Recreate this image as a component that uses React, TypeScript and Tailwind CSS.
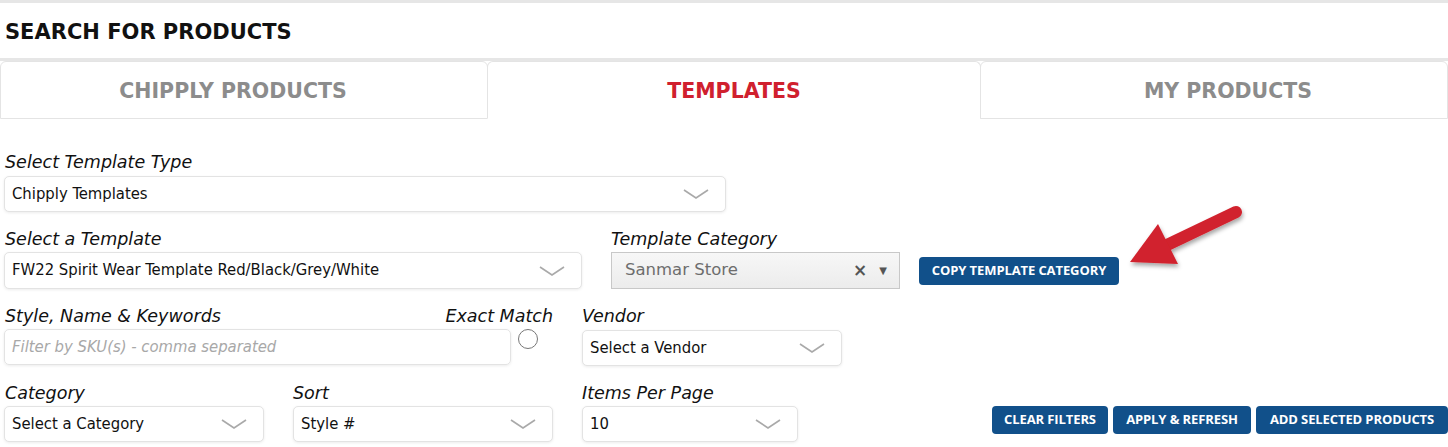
import React from "react";

const Chevron = () => (
  <svg width="26" height="10" viewBox="0 0 26 10" fill="none" className="shrink-0">
    <path d="M1 1 L13 9 L25 1" stroke="#a9a9a9" strokeWidth="1.6" />
  </svg>
);

const Label = ({ children, className = "" }: { children: React.ReactNode; className?: string }) => (
  <div className={`italic text-[17.5px] leading-[20px] text-[#111] font-['DejaVu_Sans',sans-serif] ${className}`}>
    {children}
  </div>
);

const Select = ({ value, className = "" }: { value: string; className?: string }) => (
  <div
    className={`flex items-center justify-between h-[36px] pl-[7px] pr-[16px] bg-white border border-[#e3e3e3] rounded-[5px] shadow-[0_1px_3px_rgba(0,0,0,0.08)] ${className}`}
  >
    <span className="text-[16.5px] text-[#111] font-['DejaVu_Sans_Condensed','DejaVu_Sans',sans-serif]">{value}</span>
    <Chevron />
  </div>
);

const Btn = ({ children, className = "" }: { children: React.ReactNode; className?: string }) => (
  <button
    className={`h-[28px] px-[10px] bg-[#11508a] text-white text-[13px] font-bold rounded-[4px] font-['Open_Sans',sans-serif] tracking-[-0.1px] ${className}`}
  >
    {children}
  </button>
);

const Tab = ({ label, active, className = "" }: { label: string; active?: boolean; className?: string }) => (
  <div
    className={`flex items-center justify-center h-[58px] pt-[3px] border border-[#e4e4e4] rounded-t-[6px] font-['DejaVu_Sans',sans-serif] font-bold text-[20.5px] ${
      active ? "text-[#d0202e] border-b-white" : "text-[#8c8c8c]"
    } ${className}`}
  >
    {label}
  </div>
);

export default function App() {
  return (
    <div className="w-[1448px] h-[447px] overflow-hidden bg-white relative">
      <div className="border-t-[3px] border-[#e6e6e6]" />
      <div className="h-[55px] pt-[4px] flex items-center pl-[5px] font-['DejaVu_Sans',sans-serif] font-bold text-[21px] text-[#111]">
        SEARCH FOR PRODUCTS
      </div>
      <div className="border-t-[3px] border-[#e6e6e6]" />
      <div className="flex">
        <Tab label="CHIPPLY PRODUCTS" className="w-[488px] pr-[22px]" />
        <Tab label="TEMPLATES" active className="w-[494px] -ml-px" />
        <Tab label="MY PRODUCTS" className="flex-1 -ml-px pl-[28px]" />
      </div>

      <div className="pl-[4px] pt-[33px]">
        <Label className="pl-[1px]">Select Template Type</Label>
        <Select value="Chipply Templates" className="w-[722px] mt-[4px]" />

        <div className="flex mt-[17px] items-start">
          <div className="w-[578px]">
            <Label className="pl-[1px]">Select a Template</Label>
            <Select value="FW22 Spirit Wear Template Red/Black/Grey/White" className="mt-[3px] h-[37px]" />
          </div>
          <div className="ml-[29px] w-[289px]">
            <Label>Template Category</Label>
            <div className="mt-[3px] h-[37px] flex items-center justify-between pl-[13px] pr-[12px] border border-[#c8c8c8] bg-gradient-to-b from-[#f7f7f7] to-[#ececec] font-['DejaVu_Sans',sans-serif]">
              <span className="text-[16.5px] text-[#6d6d6d]">Sanmar Store</span>
              <span className="flex items-center gap-[12px] text-[#555]">
                <span className="text-[17px] font-bold leading-none">×</span>
                <span className="text-[10px] leading-none">▼</span>
              </span>
            </div>
          </div>
          <Btn className="ml-[19px] mt-[28px] w-[200px]">COPY TEMPLATE CATEGORY</Btn>
        </div>

        <div className="flex mt-[17px] items-start">
          <div className="w-[507px]">
            <Label className="pl-[1px]">Style, Name &amp; Keywords</Label>
            <div className="mt-[3px] h-[36px] flex items-center pl-[7px] border border-[#e3e3e3] rounded-[5px] shadow-[0_1px_3px_rgba(0,0,0,0.08)]">
              <span className="italic text-[16.5px] text-[#a8a8a8] font-['DejaVu_Sans_Condensed','DejaVu_Sans',sans-serif]">
                Filter by SKU(s) - comma separated
              </span>
            </div>
          </div>
          <div className="w-[71px] relative">
            <Label className="absolute right-[29px] top-0 whitespace-nowrap">Exact Match</Label>
            <div className="mt-[23px] ml-[7px] w-[20px] h-[20px] rounded-full border border-[#777] bg-white" />
          </div>
          <div className="w-[260px]">
            <Label>Vendor</Label>
            <Select value="Select a Vendor" className="mt-[4px]" />
          </div>
        </div>

        <div className="flex mt-[17px] items-start">
          <div className="w-[260px]">
            <Label className="pl-[1px]">Category</Label>
            <Select value="Select a Category" className="mt-[3px]" />
          </div>
          <div className="w-[260px] ml-[29px]">
            <Label>Sort</Label>
            <Select value="Style #" className="mt-[3px]" />
          </div>
          <div className="w-[216px] ml-[29px]">
            <Label>Items Per Page</Label>
            <Select value="10" className="mt-[3px]" />
          </div>
          <div className="flex gap-[5px] ml-auto mt-[23px]">
            <Btn className="w-[116px]">CLEAR FILTERS</Btn>
            <Btn className="w-[138px]">APPLY &amp; REFRESH</Btn>
            <Btn className="w-[192px]">ADD SELECTED PRODUCTS</Btn>
          </div>
        </div>
      </div>

      <svg
        className="absolute left-[1125px] top-[200px]"
        width="130"
        height="80"
        viewBox="0 0 130 80"
      >
        <defs>
          <filter id="sh" x="-20%" y="-20%" width="140%" height="160%">
            <feDropShadow dx="1" dy="3" stdDeviation="2" floodColor="#000" floodOpacity="0.35" />
          </filter>
        </defs>
        <g filter="url(#sh)" fill="#d1222d">
          <path d="M111 12 L42 45" stroke="#d1222d" strokeWidth="12" strokeLinecap="round" />
          <path d="M5 62 L33 24 L53 64 Z" />
        </g>
      </svg>
    </div>
  );
}
